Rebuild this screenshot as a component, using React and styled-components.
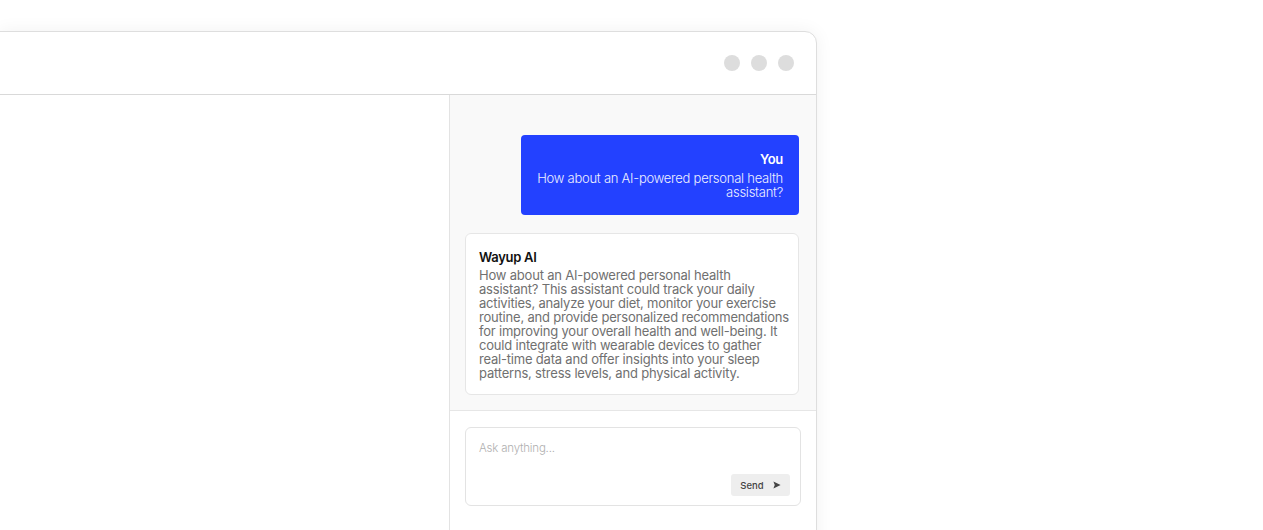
import React from "react";
import styled, { createGlobalStyle } from "styled-components";

const Global = createGlobalStyle`
  html, body { margin: 0; padding: 0; background: #ffffff; overflow: hidden; }
  body { font-family: Inter, "Noto Sans", sans-serif; }
  * { box-sizing: border-box; }
`;

const Page = styled.div`
  width: 1263px;
  height: 530px;
  padding-top: 31px;
  overflow: hidden;
`;

const Window = styled.div`
  margin-left: -1px;
  width: 818px;
  height: 560px;
  background: #ffffff;
  border: 1px solid #dedede;
  border-radius: 0 12px 0 0;
  box-shadow: 0 0 18px rgba(0, 0, 0, 0.06);
  display: flex;
  flex-direction: column;
  overflow: hidden;
`;

const Header = styled.div`
  height: 63px;
  flex: none;
  border-bottom: 1px solid #d9d9d9;
  display: flex;
  align-items: center;
  justify-content: flex-end;
  gap: 11px;
  padding-right: 22px;
`;

const Dot = styled.span`
  width: 16px;
  height: 16px;
  border-radius: 50%;
  background: #dddddd;
`;

const Body = styled.div`
  flex: 1;
  display: flex;
  min-height: 0;
`;

const LeftPane = styled.div`
  width: 450px;
  flex: none;
  background: #ffffff;
  border-right: 1px solid #e3e3e3;
`;

const ChatPane = styled.div`
  flex: 1;
  display: flex;
  flex-direction: column;
  background: #ffffff;
`;

const Messages = styled.div`
  height: 316px;
  flex: none;
  background: #f9f9f9;
  border-bottom: 1px solid #e6e6e6;
  padding: 40px 17px 15px 15px;
  display: flex;
  flex-direction: column;
  gap: 18px;
`;

const UserBubble = styled.div`
  align-self: flex-end;
  width: 278px;
  background: #2341ff;
  border-radius: 4px;
  padding: 16px 16px;
  color: #ffffff;
  text-align: right;
  display: flex;
  flex-direction: column;
  gap: 4px;
`;

const Author = styled.div`
  font-size: 13px;
  line-height: 16px;
  font-weight: 600;
  letter-spacing: -0.3px;
  color: ${(p) => (p.$light ? "#ffffff" : "#111111")};
`;

const Text = styled.div`
  font-size: 13px;
  line-height: 14px;
  letter-spacing: ${(p) => (p.$light ? "-0.25px" : "-0.2px")};
  font-weight: ${(p) => (p.$light ? 300 : 400)};
  color: ${(p) => (p.$light ? "#eef0ff" : "#707070")};
`;

const BotCard = styled.div`
  background: #ffffff;
  border: 1px solid #e6e6e6;
  border-radius: 6px;
  padding: 15px 8px 14px 13px;
  display: flex;
  flex-direction: column;
  gap: 3px;
`;

const Composer = styled.div`
  padding: 16px 15px 0 15px;
`;

const InputBox = styled.div`
  height: 79px;
  border: 1px solid #e3e3e3;
  border-radius: 6px;
  background: #ffffff;
  padding: 13px 10px 9px 13px;
  display: flex;
  flex-direction: column;
  justify-content: space-between;
`;

const Placeholder = styled.div`
  font-size: 11.5px;
  line-height: 14px;
  letter-spacing: -0.2px;
  color: #b0b0b0;
  font-weight: 300;
`;

const SendButton = styled.button`
  align-self: flex-end;
  height: 22px;
  width: 59px;
  border: none;
  border-radius: 3px;
  background: #eeeeee;
  color: #444444;
  font-family: Inter, sans-serif;
  font-size: 9.5px;
  font-weight: 500;
  display: flex;
  align-items: center;
  justify-content: center;
  gap: 9px;
  padding: 0;
`;

const SendIcon = () => (
  <svg width="8" height="8" viewBox="0 0 10 10">
    <path d="M0.5 0.5 L9.5 5 L0.5 9.5 L2.2 5 Z" fill="#444444" />
  </svg>
);

export default function App() {
  return (
    <>
      <Global />
      <Page>
        <Window>
          <Header>
            <Dot />
            <Dot />
            <Dot />
          </Header>
          <Body>
            <LeftPane />
            <ChatPane>
              <Messages>
                <UserBubble>
                  <Author $light>You</Author>
                  <Text $light>How about an AI-powered personal health assistant?</Text>
                </UserBubble>
                <BotCard>
                  <Author>Wayup AI</Author>
                  <Text>
                    How about an AI-powered personal health assistant? This assistant could track
                    your daily activities, analyze your diet, monitor your exercise routine, and
                    provide personalized recommendations for improving your overall health and
                    well-being. It could integrate with wearable devices to gather real-time data
                    and offer insights into your sleep patterns, stress levels, and physical
                    activity.
                  </Text>
                </BotCard>
              </Messages>
              <Composer>
                <InputBox>
                  <Placeholder>Ask anything...</Placeholder>
                  <SendButton>
                    Send
                    <SendIcon />
                  </SendButton>
                </InputBox>
              </Composer>
            </ChatPane>
          </Body>
        </Window>
      </Page>
    </>
  );
}
